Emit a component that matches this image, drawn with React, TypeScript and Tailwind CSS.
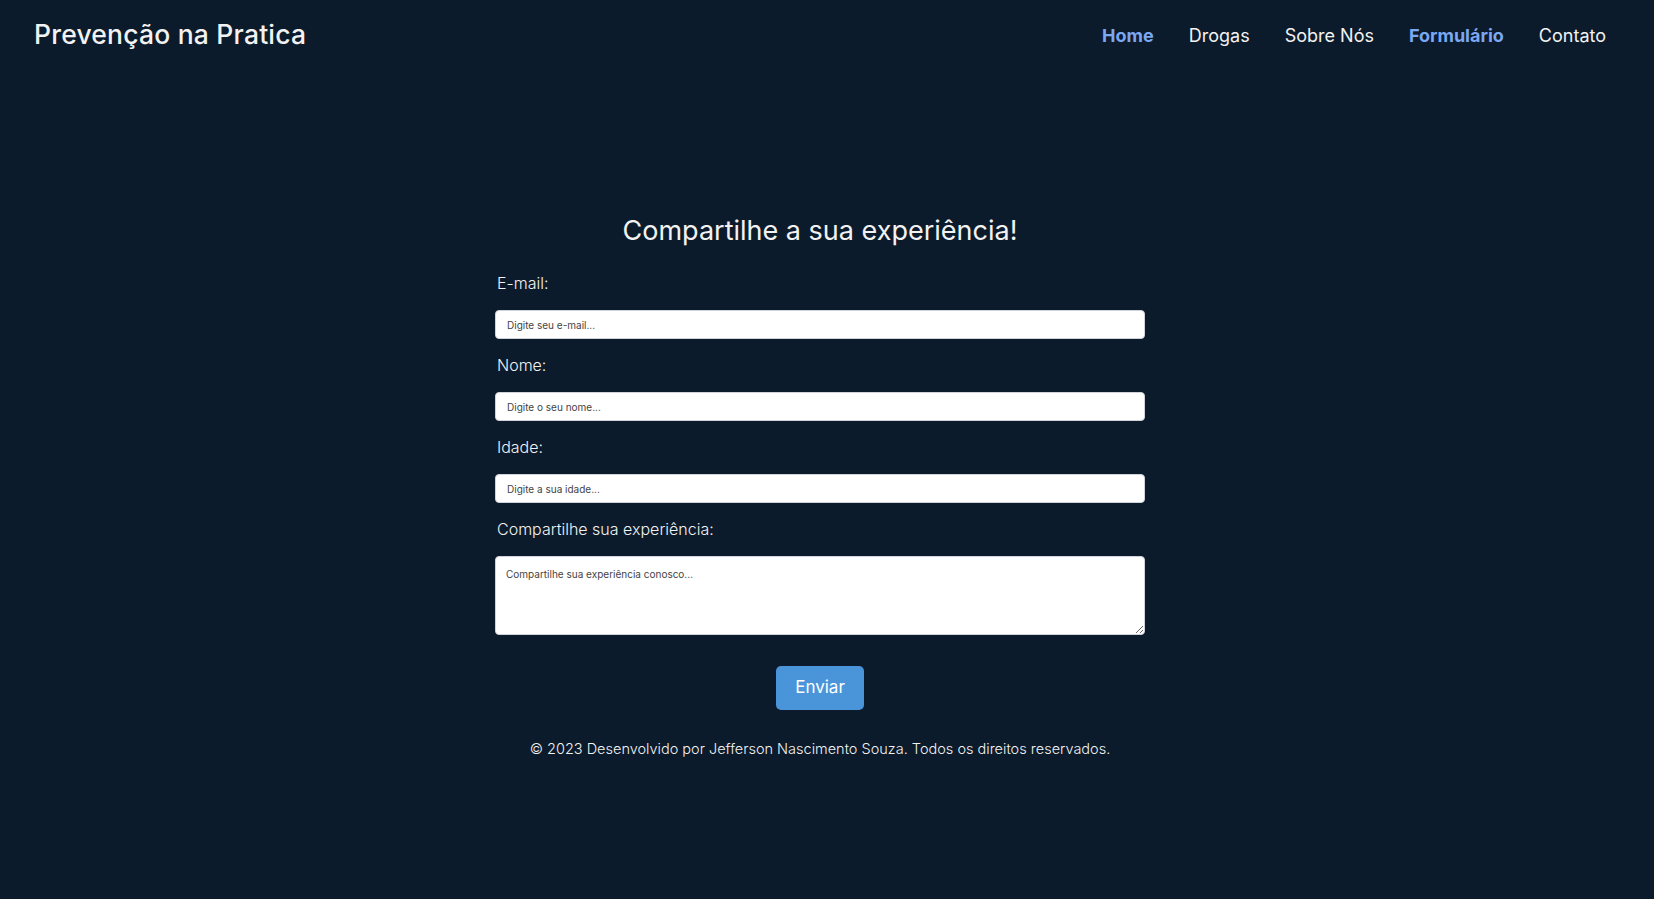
import React from "react";

const links = [
  { label: "Home", active: true },
  { label: "Drogas", active: false },
  { label: "Sobre Nós", active: false },
  { label: "Formulário", active: true },
  { label: "Contato", active: false },
];

const fields = [
  { id: "email", label: "E-mail:", type: "email", placeholder: "Digite seu e-mail..." },
  { id: "nome", label: "Nome:", type: "text", placeholder: "Digite o seu nome..." },
  { id: "idade", label: "Idade:", type: "number", placeholder: "Digite a sua idade..." },
];

export default function App() {
  return (
    <div className="min-h-[899px] bg-[#0c1b2b] text-[#f2f2f2] font-['Inter','Noto_Sans',sans-serif] pr-[14px]">
      <header className="flex items-center justify-between h-[70px] px-[34px]">
        <h1 className="text-[26.5px] font-medium tracking-[0.2px]">Prevenção na Pratica</h1>
        <nav>
          <ul className="flex items-center gap-[35px] text-[18px]">
            {links.map((l) => (
              <li key={l.label}>
                <a
                  href="#"
                  className={l.active ? "font-bold text-[#7aa8f2]" : "font-normal text-[#f2f2f2]"}
                >
                  {l.label}
                </a>
              </li>
            ))}
          </ul>
        </nav>
      </header>

      <main className="flex flex-col items-center pt-[143px]">
        <h2 className="text-[27px] leading-[36px] font-normal">Compartilhe a sua experiência!</h2>
        <form className="w-[650px] mt-[22px] flex flex-col">
          {fields.map((f) => (
            <div key={f.id} className="flex flex-col">
              <label htmlFor={f.id} className="text-[16px] leading-[24px] font-light pl-[2px] mb-[15px]">
                {f.label}
              </label>
              <input
                id={f.id}
                type={f.type}
                placeholder={f.placeholder}
                className="h-[29px] mb-[14px] rounded-[4px] border border-[#d0d4da] bg-white px-[11px] text-[10px] text-[#222] placeholder:text-[#444] outline-none"
              />
            </div>
          ))}
          <label htmlFor="exp" className="text-[16px] leading-[24px] font-light pl-[2px] mb-[15px]">
            Compartilhe sua experiência:
          </label>
          <textarea
            id="exp"
            placeholder="Compartilhe sua experiência conosco..."
            className="h-[79px] rounded-[4px] border border-[#d0d4da] bg-white px-[10px] py-[10px] text-[10px] leading-[14px] text-[#222] placeholder:text-[#444] outline-none"
          />
          <button
            type="submit"
            className="self-center mt-[31px] w-[88px] h-[44px] rounded-[5px] bg-[#4a95da] text-white text-[17px]"
          >
            Enviar
          </button>
        </form>
        <footer className="mt-[29px] text-[14.5px] leading-[20px] font-light">
          © 2023 Desenvolvido por Jefferson Nascimento Souza. Todos os direitos reservados.
        </footer>
      </main>
    </div>
  );
}
